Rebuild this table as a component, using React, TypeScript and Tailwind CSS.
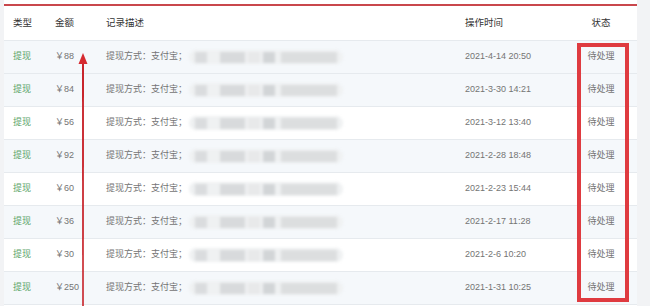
import React from "react";

type Row = { amount: string; time: string; shaded: boolean };

const rows: Row[] = [
  { amount: "88", time: "2021-4-14 20:50", shaded: true },
  { amount: "84", time: "2021-3-30 14:21", shaded: true },
  { amount: "56", time: "2021-3-12 13:40", shaded: false },
  { amount: "92", time: "2021-2-28 18:48", shaded: true },
  { amount: "60", time: "2021-2-23 15:44", shaded: false },
  { amount: "36", time: "2021-2-17 11:28", shaded: true },
  { amount: "30", time: "2021-2-6 10:20", shaded: false },
  { amount: "250", time: "2021-1-31 10:25", shaded: true },
];

const font = {
  fontFamily: '"Liberation Sans", "Noto Sans CJK SC", sans-serif',
};

const grid = "grid grid-cols-[46px_52px_359px_104px_1fr] items-center";

function Masked() {
  // obscured account details
  return (
    <div className="ml-[2px] flex h-[14px] w-[154px] items-center gap-[3px] rounded-full bg-[#eff1f2] px-[6px] blur-[1.5px]">
      <div className="h-[11px] w-[12px] bg-[#dadcde]" />
      <div className="ml-[10px] h-[11px] w-[25px] bg-[#d8dadc]" />
      <div className="h-[11px] w-[12px] bg-[#e8e9ea]" />
      <div className="h-[11px] w-[13px] bg-[#d2d5d7]" />
      <div className="ml-[3px] h-[11px] w-[56px] bg-[#dcdedf]" />
    </div>
  );
}

export default function App() {
  return (
    <div className="relative h-[306px] w-[650px] overflow-hidden bg-[#f2f3f5]" style={font}>
      <div className="ml-[4px] h-full w-[633px] bg-white pt-[4px]">
        <div className="h-[2px] w-full bg-[#c9474c]" />
        <div className={`${grid} h-[35px] border-b border-[#e6eaee] text-[9.5px] text-[#333]`}>
          <div className="pl-[9px]">类型</div>
          <div className="pl-[5px]">金额</div>
          <div className="pl-[4px]">记录描述</div>
          <div className="pl-[4px]">操作时间</div>
          <div className="text-center">状态</div>
        </div>
        {rows.map((r) => (
          <div
            key={r.time}
            className={`${grid} h-[33px] border-b border-[#e6eaee] text-[9px] text-[#747474] ${
              r.shaded ? "bg-[#f5f8fb]" : "bg-white"
            }`}
          >
            <div className="pl-[9px] text-[#5aa468]">提现</div>
            <div className="pl-[5px]">
              <span>￥</span>
              {r.amount}
            </div>
            <div className="flex items-center pl-[4px]">
              <span>提现方式：支付宝；</span>
              <Masked />
            </div>
            <div className="pl-[4px]">{r.time}</div>
            <div className="text-center">待处理</div>
          </div>
        ))}
      </div>

      {/* annotation: arrow */}
      <svg className="absolute left-0 top-0" width="650" height="306">
        <path d="M82.2 306 L82 62 L84 62 L83.8 306 Z" fill="#c8252c" />
        <path d="M83 53 L78.5 64 L87.5 64 Z" fill="#d62a30" />
      </svg>

      {/* annotation: status column highlight */}
      <div className="absolute left-[577px] top-[43px] h-[259px] w-[52px] border-[4px] border-[#df3b40]" />
    </div>
  );
}
